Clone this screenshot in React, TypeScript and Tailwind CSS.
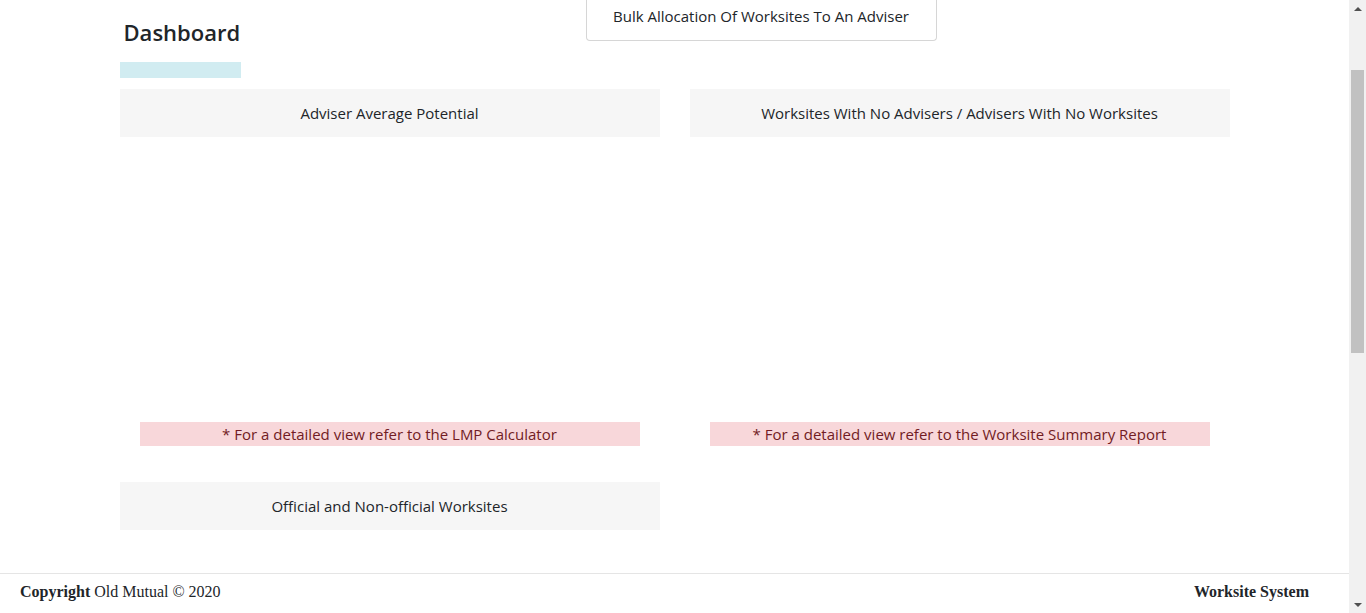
import React from 'react';

const font = { fontFamily: '"Open Sans", "Noto Sans", sans-serif' };

const CardTitle = ({ title }: { title: string }) => (
  <div className="h-[48px] bg-[#f6f6f6] flex items-center justify-center text-[15px] text-[#212529]">{title}</div>
);

const Note = ({ text }: { text: string }) => (
  <div className="mx-[20px] h-[24px] bg-[#f8d7da] flex items-center justify-center text-[15px] text-[#721c24]">{text}</div>
);

const Scrollbar = () => (
  <div className="w-[17px] h-screen bg-[#f1f1f1] flex flex-col items-center">
    <div className="h-[17px] flex items-center justify-center">
      <div className="w-0 h-0 border-l-[4px] border-r-[4px] border-b-[4px] border-l-transparent border-r-transparent border-b-[#505050]" />
    </div>
    <div className="mt-[53px] w-[13px] h-[283px] bg-[#c1c1c1]" />
    <div className="flex-1" />
    <div className="h-[17px] flex items-center justify-center">
      <div className="w-0 h-0 border-l-[4px] border-r-[4px] border-t-[4px] border-l-transparent border-r-transparent border-t-[#505050]" />
    </div>
  </div>
);

export default function App() {
  return (
    <div className="flex w-full h-screen overflow-hidden bg-white" style={font}>
      <div className="flex-1 flex flex-col">
        <main className="h-[573px] w-[1110px] mx-auto">
          <div className="flex items-start">
            <div className="w-[121px]">
              <h2 className="pt-[18px] pl-[4px] text-[22px] leading-[29px] font-semibold text-[#212529]">Dashboard</h2>
              <div className="mt-[15px] h-[16px] bg-[#d1ecf1]" />
            </div>
            <button className="ml-[345px] w-[351px] border border-t-0 border-[#d6d6d6] rounded-b-[4px] pt-[4px] pb-[12px] leading-6 text-[15px] text-[#212529] bg-white">
              Bulk Allocation Of Worksites To An Adviser
            </button>
          </div>

          <div className="mt-[11px] grid grid-cols-2 gap-x-[30px]">
            <div>
              <CardTitle title="Adviser Average Potential" />
              <div className="h-[285px]" />
              <Note text="* For a detailed view refer to the LMP Calculator" />
            </div>
            <div>
              <CardTitle title="Worksites With No Advisers / Advisers With No Worksites" />
              <div className="h-[285px]" />
              <Note text="* For a detailed view refer to the Worksite Summary Report" />
            </div>
          </div>

          <div className="mt-[36px] grid grid-cols-2 gap-x-[30px]">
            <CardTitle title="Official and Non-official Worksites" />
          </div>
        </main>

        <footer
          className="h-[40px] pb-[4px] border-t border-[#e5e5e5] flex items-center justify-between pl-[20px] pr-[40px] text-[16px] text-[#212529]"
          style={{ fontFamily: '"Liberation Serif", "Times New Roman", serif' }}
        >
          <span>
            <b>Copyright</b> Old Mutual © 2020
          </span>
          <b>Worksite System</b>
        </footer>
      </div>
      <Scrollbar />
    </div>
  );
}
